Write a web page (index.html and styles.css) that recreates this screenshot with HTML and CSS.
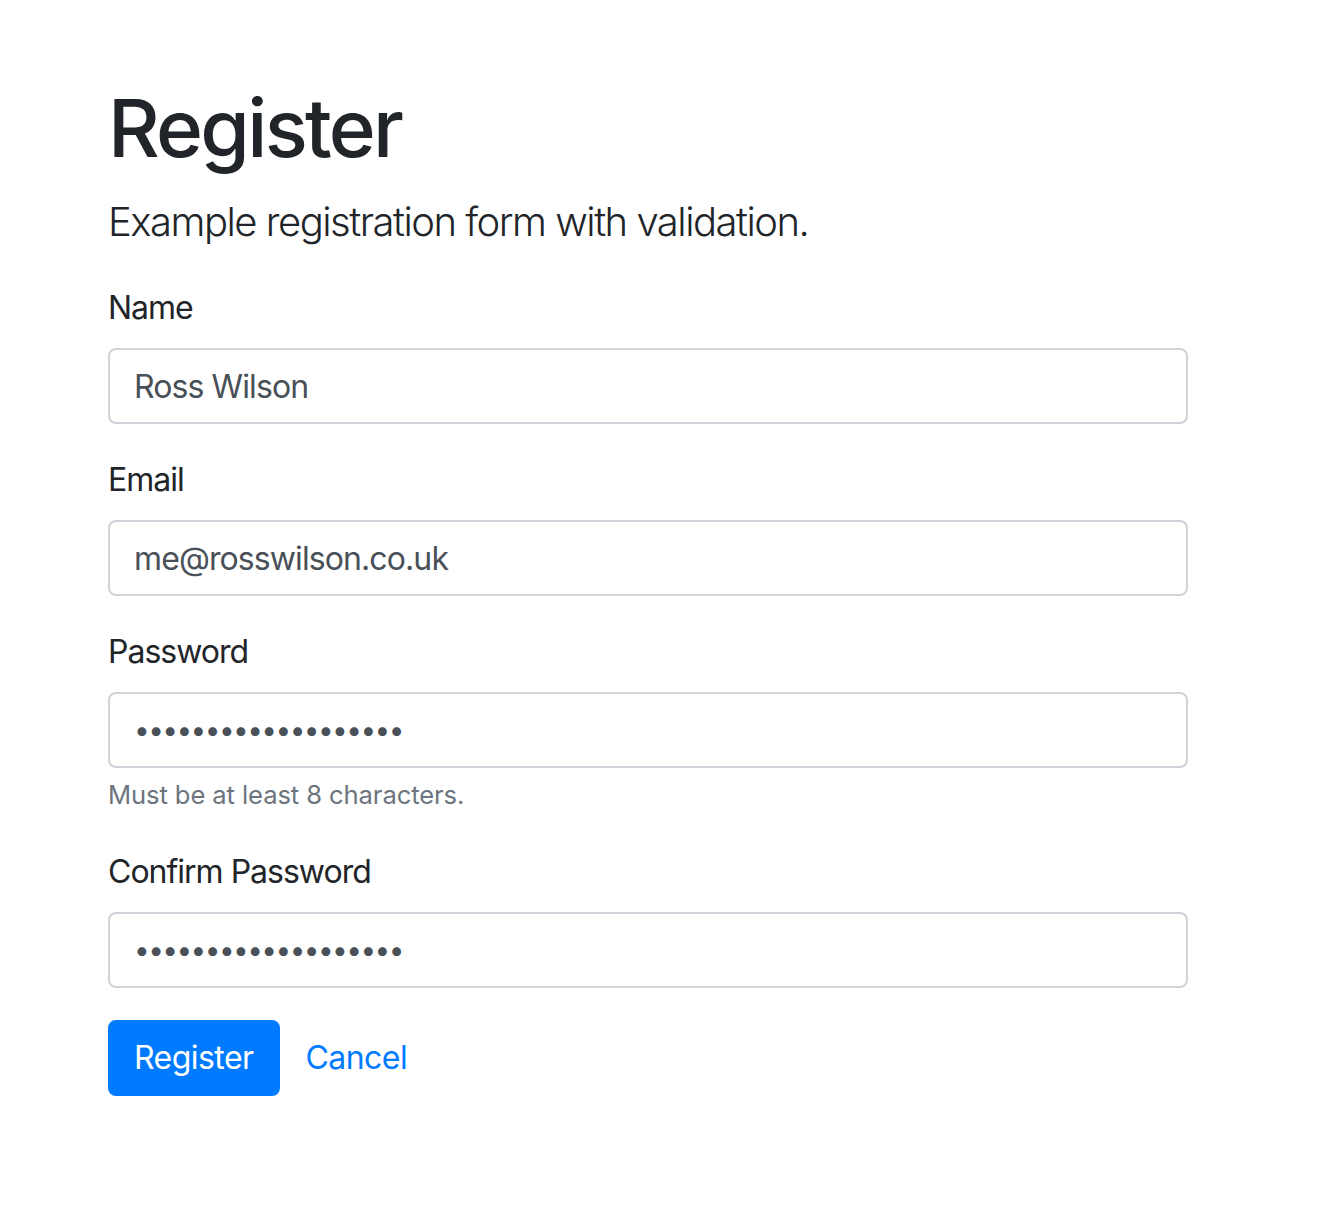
FILE: index.html
```html
<!DOCTYPE html>
<html lang="en">
<head>
<meta charset="utf-8">
<title>Register</title>
<link rel="stylesheet" href="styles.css">
</head>
<body>
<main class="container">
  <h1 class="title">Register</h1>
  <p class="lead">Example registration form with validation.</p>
  <form class="form">
    <div class="form-group">
      <label class="label" for="name">Name</label>
      <input class="control" id="name" type="text" value="Ross Wilson">
    </div>
    <div class="form-group">
      <label class="label" for="email">Email</label>
      <input class="control" id="email" type="email" value="me@rosswilson.co.uk">
    </div>
    <div class="form-group">
      <label class="label" for="password">Password</label>
      <input class="control control-pw" id="password" type="password" value="secretpassword12345">
      <small class="help">Must be at least 8 characters.</small>
    </div>
    <div class="form-group">
      <label class="label" for="confirm">Confirm Password</label>
      <input class="control control-pw" id="confirm" type="password" value="secretpassword12345">
    </div>
    <div class="actions">
      <button class="btn btn-primary" type="button">Register</button>
      <a class="btn btn-link" href="#">Cancel</a>
    </div>
  </form>
</main>
</body>
</html>
```

FILE: styles.css
```css
* { box-sizing: border-box; }
html, body { margin: 0; padding: 0; background: #fff; }
body {
  font-family: Inter, "Noto Sans", "Liberation Sans", sans-serif;
  color: #212529;
  font-size: 32px;
  line-height: 1.5;
}
.container {
  width: 1080px;
  margin-left: 108px;
  padding-top: 80px;
}
.title {
  font-size: 80px;
  font-weight: 500;
  line-height: 1.2;
  margin: 0 0 16px;
  letter-spacing: -2.7px;
}
.lead {
  font-size: 40px;
  font-weight: 300;
  line-height: 1.5;
  margin: 0 0 32px;
  letter-spacing: -1.5px;
}
.form { margin: 0; }
.form-group { margin-bottom: 32px; }
.label {
  display: block;
  margin-bottom: 16px;
  line-height: 48px;
  font-size: 32px;
  font-weight: 400;
  letter-spacing: -1px;
}
.control {
  display: block;
  width: 100%;
  height: 76px;
  padding: 12px 24px;
  font-family: inherit;
  font-size: 32px;
  line-height: 48px;
  color: #495057;
  background: #fff;
  border: 2px solid #ced4da;
  border-radius: 8px;
  outline: none;
  letter-spacing: -0.9px;
}
.control-pw {
  letter-spacing: -1.6px;
  font-size: 28px;
  padding-left: 24px;
}
.help {
  display: block;
  margin-top: 8px;
  padding-bottom: 2px;
  font-size: 25.6px;
  line-height: 38.4px;
  color: #6c757d;
  letter-spacing: -0.1px;
}
.actions {
  display: flex;
  align-items: center;
  gap: 0;
}
.btn {
  display: inline-block;
  font-family: inherit;
  font-size: 32px;
  line-height: 48px;
  padding: 12px 24px;
  border: 2px solid transparent;
  border-radius: 8px;
  text-decoration: none;
  cursor: pointer;
  letter-spacing: -0.55px;
}
.btn-primary {
  color: #fff;
  background: #007bff;
  border-color: #007bff;
}
.btn-link {
  color: #007bff;
  background: transparent;
}
```
